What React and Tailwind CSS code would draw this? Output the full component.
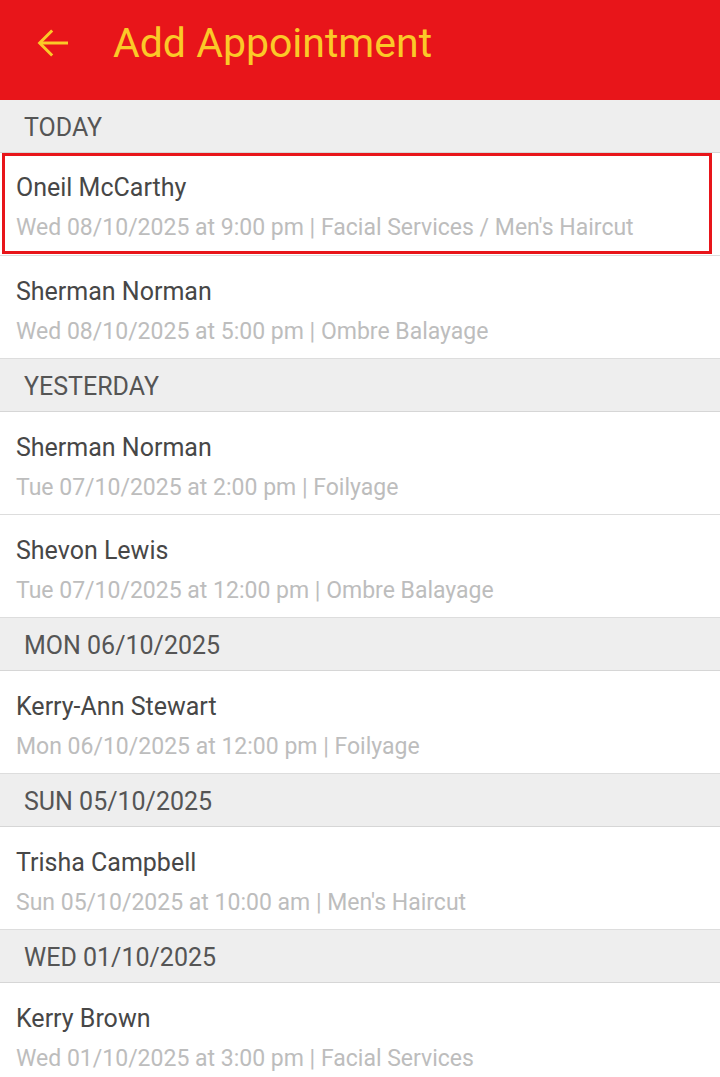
import React from 'react'

const sections = [
  {
    title: 'TODAY',
    items: [
      { name: 'Oneil McCarthy', detail: 'Wed 08/10/2025 at 9:00 pm | Facial Services / Men\'s Haircut', selected: true },
      { name: 'Sherman Norman', detail: 'Wed 08/10/2025 at 5:00 pm | Ombre Balayage' },
    ],
  },
  {
    title: 'YESTERDAY',
    items: [
      { name: 'Sherman Norman', detail: 'Tue 07/10/2025 at 2:00 pm | Foilyage' },
      { name: 'Shevon Lewis', detail: 'Tue 07/10/2025 at 12:00 pm | Ombre Balayage' },
    ],
  },
  {
    title: 'MON 06/10/2025',
    items: [{ name: 'Kerry-Ann Stewart', detail: 'Mon 06/10/2025 at 12:00 pm | Foilyage' }],
  },
  {
    title: 'SUN 05/10/2025',
    items: [{ name: 'Trisha Campbell', detail: 'Sun 05/10/2025 at 10:00 am | Men\'s Haircut' }],
  },
  {
    title: 'WED 01/10/2025',
    items: [{ name: 'Kerry Brown', detail: 'Wed 01/10/2025 at 3:00 pm | Facial Services' }],
  },
]

const ItemText = ({ item }) => (
  <>
    <div className="text-[25px] leading-[30px] text-[#474747]">{item.name}</div>
    <div className="text-[23px] leading-[28px] mt-[11px] text-[#bdbdbd]">{item.detail}</div>
  </>
)

const App = () => {
  return (
    <div className="w-[720px] h-[1077px] overflow-hidden bg-white" style={{ fontFamily: 'Roboto, "Liberation Sans", sans-serif' }}>
      {/* Toolbar */}
      <div className="h-[100px] bg-[#e8151a] flex items-center pb-[14px]">
        <div className="w-[113px] pl-[33px] flex">
          <svg width="40" height="40" viewBox="0 0 24 24" fill="none" stroke="#fbc928" strokeWidth="1.8">
            <path d="M21 12H4" />
            <path d="M11.5 4.5L4 12l7.5 7.5" />
          </svg>
        </div>
        <h1 className="text-[41px] leading-[48px] text-[#fbc928]">Add Appointment</h1>
      </div>

      {sections.map(section => (
        <div key={section.title}>
          <div className="h-[53px] bg-[#eeeeee] border-b border-[#d6d6d6] flex items-center pl-[24px] pt-[4px]">
            <span className="text-[25px] text-[#555555]">{section.title}</span>
          </div>
          {section.items.map((item, i) =>
            item.selected ? (
              <div key={i} className="h-[103px] border-b border-[#dddddd] pl-[2px] pr-[8px] pb-[1px]">
                <div className="h-full border-[3px] border-[#e8151a] flex flex-col justify-center pl-[11px] pt-[8px]">
                  <ItemText item={item} />
                </div>
              </div>
            ) : (
              <div key={i} className="h-[103px] border-b border-[#dddddd] flex flex-col justify-center pl-[16px] pt-[8px]">
                <ItemText item={item} />
              </div>
            )
          )}
        </div>
      ))}
    </div>
  )
}

export default App
